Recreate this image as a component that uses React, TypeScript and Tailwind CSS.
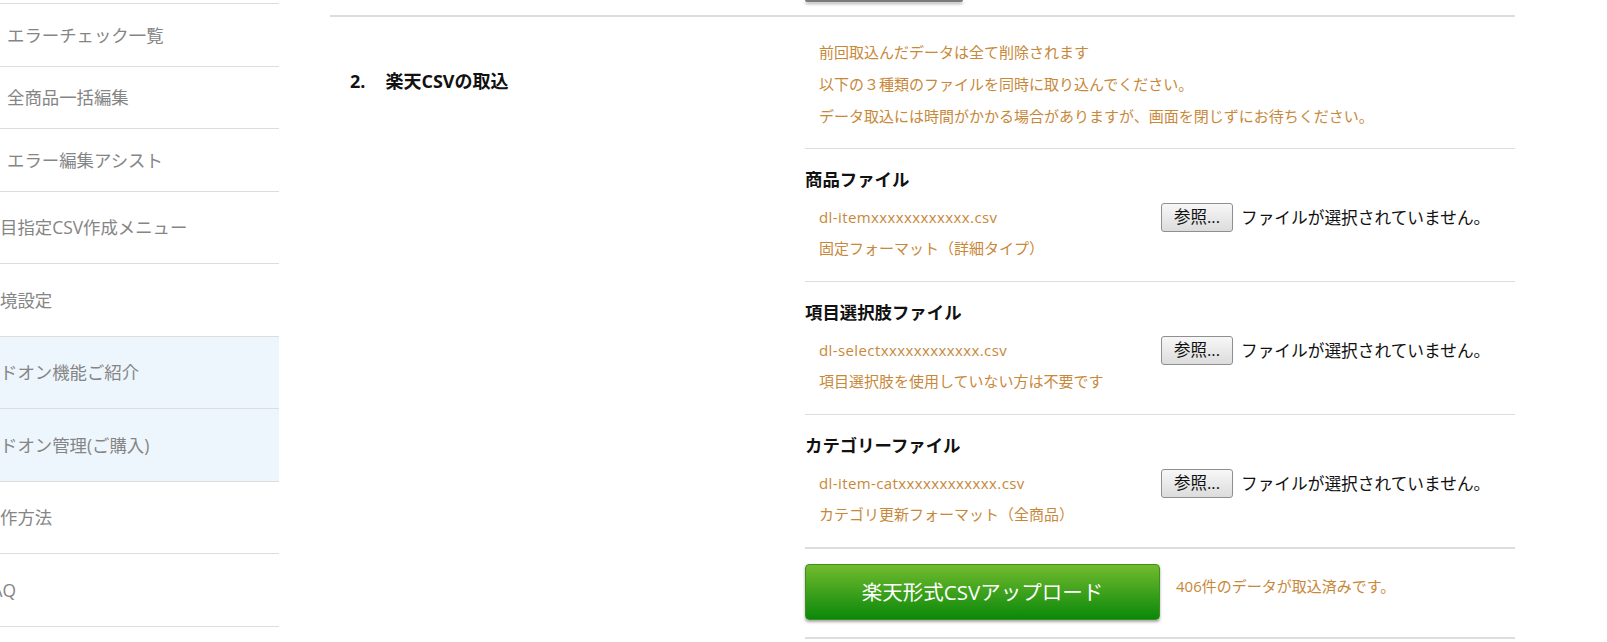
const font = { fontFamily: '"Open Sans", "Noto Sans CJK JP", sans-serif' };

const menu = [
  { label: "エラーチェック一覧", h: "h-[63px]", sub: true },
  { label: "全商品一括編集", h: "h-[62px]", sub: true },
  { label: "エラー編集アシスト", h: "h-[63px]", sub: true },
  { label: "項目指定CSV作成メニュー", h: "h-[72px]" },
  { label: "環境設定", h: "h-[73px]" },
  { label: "アドオン機能ご紹介", h: "h-[72px]", addon: true },
  { label: "アドオン管理(ご購入)", h: "h-[73px]", addon: true },
  { label: "操作方法", h: "h-[72px]" },
  { label: "FAQ", h: "h-[73px]" },
];

const files = [
  {
    title: "商品ファイル",
    name: "dl-itemxxxxxxxxxxxx.csv",
    note: "固定フォーマット（詳細タイプ）",
  },
  {
    title: "項目選択肢ファイル",
    name: "dl-selectxxxxxxxxxxxx.csv",
    note: "項目選択肢を使用していない方は不要です",
  },
  {
    title: "カテゴリーファイル",
    name: "dl-item-catxxxxxxxxxxxx.csv",
    note: "カテゴリ更新フォーマット（全商品）",
  },
];

function FileBlock({ title, name, note }: { title: string; name: string; note: string }) {
  return (
    <div className="border-t border-[#dddddd] pt-[18px] pb-[23px]">
      <h3 className="text-[17.4px] font-bold leading-6 text-[#111]">{title}</h3>
      <div className="mt-3 flex h-[29px] items-center pl-[14px]">
        <span className="w-[342px] text-[15px] tracking-[0.4px] text-[#c7883a]">{name}</span>
        <button className="h-[29px] w-[72px] rounded-[3px] border border-[#8f8f8f] bg-[linear-gradient(180deg,#f7f7f7,#dcdcdc)] text-[16.5px] text-[#111]">
          参照...
        </button>
        <span className="ml-2 text-[16.7px] text-[#111]">ファイルが選択されていません。</span>
      </div>
      <p className="mt-[6px] pl-[14px] text-[15px] leading-5 text-[#c7883a]">{note}</p>
    </div>
  );
}

export default function App() {
  return (
    <div className="flex h-[642px] w-[1607px] overflow-hidden bg-white" style={font}>
      <aside className="w-[279px] shrink-0 overflow-hidden pt-[3px]">
        <ul className="border-t border-[#dddddd]">
          {menu.map((m) => (
            <li
              key={m.label}
              className={`flex ${m.h} items-center whitespace-nowrap border-b border-[#dddddd] text-[17.4px] text-[#858585] ${
                m.addon ? "bg-[#eef6fd]" : ""
              }`}
            >
              <span className={m.sub ? "pl-[7px]" : "-ml-[17.4px]"}>{m.label}</span>
            </li>
          ))}
        </ul>
      </aside>

      <main className="ml-[51px] w-[1185px] shrink-0">
        <div className="h-[15px]">
          <div className="ml-[475px] h-[2px] w-[158px] rounded-b-[3px] bg-[#7a7a7a] shadow-[0_2px_3px_rgba(0,0,0,0.35)]" />
        </div>

        <div className="flex border-t-2 border-[#dddddd]">
          <div className="w-[475px] shrink-0 pl-[20px] pt-[52px]">
            <h2 className="text-[18px] font-bold leading-6 text-[#111]">
              2.<span className="ml-[20px]">楽天CSVの取込</span>
            </h2>
          </div>

          <div className="flex-1">
            <div className="pt-[19px] pb-4 pl-[14px] text-[15px] leading-[32px] text-[#c7883a]">
              <p>前回取込んだデータは全て削除されます</p>
              <p>以下の３種類のファイルを同時に取り込んでください。</p>
              <p>データ取込には時間がかかる場合がありますが、画面を閉じずにお待ちください。</p>
            </div>

            {files.map((f) => (
              <FileBlock key={f.title} {...f} />
            ))}

            <div className="flex items-start border-y-2 border-[#dddddd] pt-[15px] pb-[17px]">
              <button className="h-[56px] w-[355px] rounded-[4px] border border-[#3f8f1a] bg-[linear-gradient(180deg,#72bb2e,#0a880a)] text-[20.5px] text-white shadow-[0_2px_3px_rgba(0,0,0,0.35)]">
                楽天形式CSVアップロード
              </button>
              <span className="ml-4 mt-3 text-[15px] leading-5 text-[#c7883a]">406件のデータが取込済みです。</span>
            </div>
          </div>
        </div>
      </main>
    </div>
  );
}
